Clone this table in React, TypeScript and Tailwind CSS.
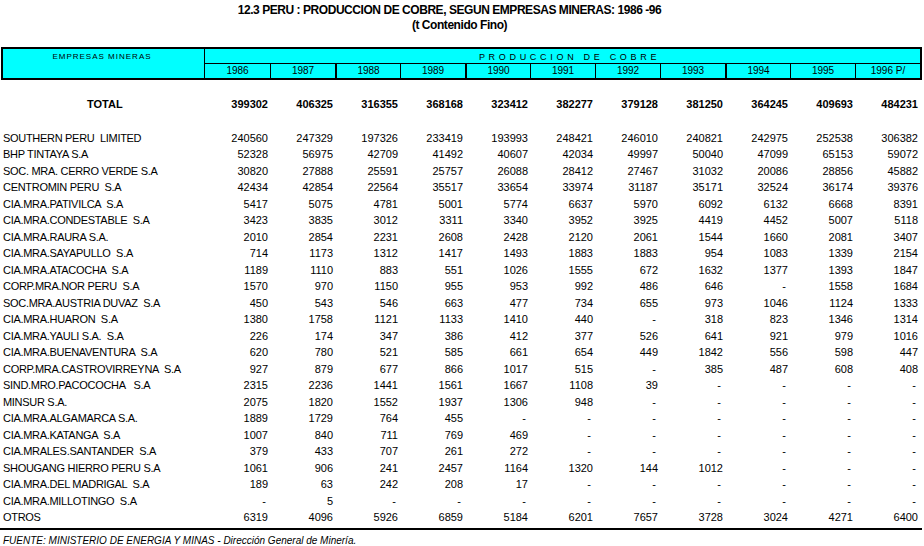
import React from "react";

type Row = { name: string; values: string[] };

const years = ["1986", "1987", "1988", "1989", "1990", "1991", "1992", "1993", "1994", "1995", "1996 P/"];

const thick = [2, 4, 8];

const total = ["399302", "406325", "316355", "368168", "323412", "382277", "379128", "381250", "364245", "409693", "484231"];

const rows: Row[] = [
  { name: "SOUTHERN PERU  LIMITED", values: "240560 247329 197326 233419 193993 248421 246010 240821 242975 252538 306382".split(" ") },
  { name: "BHP TINTAYA S.A", values: "52328 56975 42709 41492 40607 42034 49997 50040 47099 65153 59072".split(" ") },
  { name: "SOC. MRA. CERRO VERDE S.A", values: "30820 27888 25591 25757 26088 28412 27467 31032 20086 28856 45882".split(" ") },
  { name: "CENTROMIN PERU  S.A", values: "42434 42854 22564 35517 33654 33974 31187 35171 32524 36174 39376".split(" ") },
  { name: "CIA.MRA.PATIVILCA  S.A", values: "5417 5075 4781 5001 5774 6637 5970 6092 6132 6668 8391".split(" ") },
  { name: "CIA.MRA.CONDESTABLE  S.A", values: "3423 3835 3012 3311 3340 3952 3925 4419 4452 5007 5118".split(" ") },
  { name: "CIA.MRA.RAURA S.A.", values: "2010 2854 2231 2608 2428 2120 2061 1544 1660 2081 3407".split(" ") },
  { name: "CIA.MRA.SAYAPULLO  S.A", values: "714 1173 1312 1417 1493 1883 1883 954 1083 1339 2154".split(" ") },
  { name: "CIA.MRA.ATACOCHA  S.A", values: "1189 1110 883 551 1026 1555 672 1632 1377 1393 1847".split(" ") },
  { name: "CORP.MRA.NOR PERU  S.A", values: "1570 970 1150 955 953 992 486 646 - 1558 1684".split(" ") },
  { name: "SOC.MRA.AUSTRIA DUVAZ  S.A", values: "450 543 546 663 477 734 655 973 1046 1124 1333".split(" ") },
  { name: "CIA.MRA.HUARON  S.A", values: "1380 1758 1121 1133 1410 440 - 318 823 1346 1314".split(" ") },
  { name: "CIA.MRA.YAULI S.A.  S.A", values: "226 174 347 386 412 377 526 641 921 979 1016".split(" ") },
  { name: "CIA.MRA.BUENAVENTURA  S.A", values: "620 780 521 585 661 654 449 1842 556 598 447".split(" ") },
  { name: "CORP.MRA.CASTROVIRREYNA  S.A", values: "927 879 677 866 1017 515 - 385 487 608 408".split(" ") },
  { name: "SIND.MRO.PACOCOCHA   S.A", values: "2315 2236 1441 1561 1667 1108 39 - - - -".split(" ") },
  { name: "MINSUR S.A.", values: "2075 1820 1552 1937 1306 948 - - - - -".split(" ") },
  { name: "CIA.MRA.ALGAMARCA S.A.", values: "1889 1729 764 455 - - - - - - -".split(" ") },
  { name: "CIA.MRA.KATANGA  S.A", values: "1007 840 711 769 469 - - - - - -".split(" ") },
  { name: "CIA.MRALES.SANTANDER  S.A", values: "379 433 707 261 272 - - - - - -".split(" ") },
  { name: "SHOUGANG HIERRO PERU S.A", values: "1061 906 241 2457 1164 1320 144 1012 - - -".split(" ") },
  { name: "CIA.MRA.DEL MADRIGAL  S.A", values: "189 63 242 208 17 - - - - - -".split(" ") },
  { name: "CIA.MRA.MILLOTINGO  S.A", values: "- 5 - - - - - - - - -".split(" ") },
  { name: "OTROS", values: "6319 4096 5926 6859 5184 6201 7657 3728 3024 4271 6400".split(" ") },
];

const Cell = ({ v }: { v: string }) => (
  <div className={v === "-" ? "text-right pr-[5px]" : "text-right pr-[3px]"}>{v}</div>
);

export default function App() {
  return (
    <div className="w-[924px] h-[546px] overflow-hidden bg-white text-black font-['Liberation_Sans',Arial,sans-serif]">
      <div className="pt-[3px] font-bold text-[12px] leading-[15px] tracking-[-0.45px]">
        <div className="w-[899px] text-center">12.3 PERU : PRODUCCION DE COBRE, SEGUN EMPRESAS MINERAS: 1986 -96</div>
        <div className="w-[919px] text-center">(t Contenido Fino)</div>
      </div>

      <div className="mt-[14px] ml-[1px] w-[921px] h-[33px] flex border-2 border-black bg-[#00ffff]">
        <div className="w-[202px] border-r border-black text-center text-[8px] leading-[14px] tracking-[1px] pt-[1px] pr-[3px]">
          EMPRESAS MINERAS
        </div>
        <div className="flex-1 flex flex-col">
          <div className="h-[15px] border-b border-black text-[9px] leading-[14px] tracking-[0.6px] whitespace-pre pt-[1px] pl-[274px]">
            P R O D U C C I O N   D E   C O B R E
          </div>
          <div className="flex-1 grid grid-cols-11 text-[10px] leading-[14px]">
            {years.map((y, i) => (
              <div
                key={y}
                className={
                  i === 0
                    ? "text-center"
                    : thick.includes(i)
                    ? "text-center border-l-2 border-black"
                    : "text-center border-l border-black"
                }
              >
                {y}
              </div>
            ))}
          </div>
        </div>
      </div>

      <div className="mt-[16px] w-[921px] h-[16.5px] grid grid-cols-[206px_repeat(11,minmax(0,1fr))] items-center font-bold text-[11px] leading-[16.5px]">
        <div className="pl-[87px]">TOTAL</div>
        {total.map((v, i) => (
          <Cell key={i} v={v} />
        ))}
      </div>

      <div className="mt-[17px] w-[921px] text-[11px] leading-[16.5px]">
        {rows.map((r) => (
          <div key={r.name} className="h-[16.5px] grid grid-cols-[206px_repeat(11,minmax(0,1fr))]">
            <div className="pl-[3px] whitespace-pre tracking-[-0.3px]">{r.name}</div>
            {r.values.map((v, i) => (
              <Cell key={i} v={v} />
            ))}
          </div>
        ))}
      </div>

      <div className="mt-[2px] w-[922px] h-[2px] bg-black" />

      <div className="mt-[5px] pl-[3px] italic text-[10px] leading-[12px] whitespace-pre">
        FUENTE: MINISTERIO DE ENERGIA Y MINAS - Dirección General de Minería.
      </div>
    </div>
  );
}
